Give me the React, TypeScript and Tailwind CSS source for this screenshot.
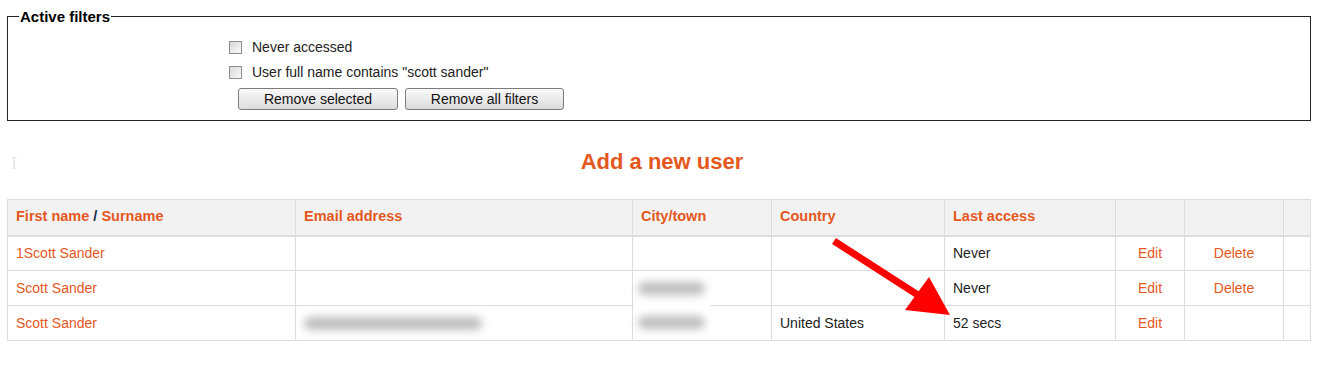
import { useState } from "react";

const orange = "text-[#e4571d]";

interface User {
  name: string;
  email: boolean;
  country: string;
  lastAccess: string;
  canDelete: boolean;
}

const users: User[] = [
  { name: "1Scott Sander", email: false, country: "", lastAccess: "Never", canDelete: true },
  { name: "Scott Sander", email: false, country: "", lastAccess: "Never", canDelete: true },
  { name: "Scott Sander", email: true, country: "United States", lastAccess: "52 secs", canDelete: false },
];

function Checkbox({ label }: { label: string }) {
  const [checked, setChecked] = useState(false);
  return (
    <label className="flex h-[25px] items-center gap-[10px] text-[14px] text-[#222]">
      <span
        onClick={() => setChecked(!checked)}
        className="box-border h-[13px] w-[13px] border border-[#8e8e8e] bg-gradient-to-br from-[#d8d8d8] to-[#fbfbfb]"
      >
        {checked && <span className="block text-[10px] leading-[11px] text-center">✓</span>}
      </span>
      {label}
    </label>
  );
}

function FilterButton({ children, width }: { children: string; width: string }) {
  return (
    <button
      className={`${width} h-[22px] rounded-[3px] border border-[#7c7c7c] bg-gradient-to-b from-[#fafafa] to-[#dcdcdc] text-[14px] leading-none text-[#111]`}
    >
      {children}
    </button>
  );
}

function Blur({ className }: { className: string }) {
  return <div className={`absolute rounded-full bg-[#bdbdbd] blur-[4px] ${className}`} />;
}

export default function App() {
  const th = "border border-[#dddddd] border-b-2 px-2 text-left font-bold text-[14.5px]";
  const td = "border border-[#dddddd] px-2 h-[35px]";

  return (
    <div className="relative min-h-[365px] w-[1324px] bg-white pt-[8px] font-['Liberation_Sans',Arial,sans-serif]">
      <fieldset className="ml-[7px] mr-[13px] border border-[#2a241e] pb-[10px] pl-[11px] pt-[10px]">
        <legend className="px-[1px] text-[15px] font-bold leading-[17px] text-black">
          Active filters
        </legend>
        <div className="pl-[210px]">
          <Checkbox label="Never accessed" />
          <Checkbox label={'User full name contains "scott sander"'} />
          <div className="mt-[3px] flex gap-[7px] pl-[9px]">
            <FilterButton width="w-[160px]">Remove selected</FilterButton>
            <FilterButton width="w-[159px]">Remove all filters</FilterButton>
          </div>
        </div>
      </fieldset>

      <div className="relative mt-[28px] text-center">
        <span className="absolute left-[11px] top-[3px] font-['DejaVu_Serif',serif] text-[16px] text-[#e6e6e6]">
          I
        </span>
        <a className={`text-[22px] font-bold leading-[26px] ${orange}`}>Add a new user</a>
      </div>

      <table className="ml-[7px] mt-[23px] w-[1304px] table-fixed border-collapse text-[14px]">
        <colgroup>
          <col className="w-[288px]" />
          <col className="w-[337px]" />
          <col className="w-[139px]" />
          <col className="w-[173px]" />
          <col className="w-[171px]" />
          <col className="w-[69px]" />
          <col className="w-[99px]" />
          <col />
        </colgroup>
        <thead>
          <tr className="h-[36px] bg-[#f2f2f2]">
            <th className={th}>
              <span className={orange}>First name</span>
              <span className="text-[#1c2a44]"> / </span>
              <span className={orange}>Surname</span>
            </th>
            <th className={`${th} ${orange}`}>Email address</th>
            <th className={`${th} ${orange}`}>City/town</th>
            <th className={`${th} ${orange}`}>Country</th>
            <th className={`${th} ${orange}`}>Last access</th>
            <th className={th}></th>
            <th className={th}></th>
            <th className={th}></th>
          </tr>
        </thead>
        <tbody>
          {users.map((u, i) => (
            <tr key={i}>
              <td className={`${td} ${orange}`}>{u.name}</td>
              <td className={`${td} relative`}>
                {u.email && <Blur className="left-[8px] right-[150px] top-[11px] h-[13px]" />}
              </td>
              <td className={td}></td>
              <td className={`${td} text-[#222]`}>{u.country}</td>
              <td className={`${td} text-[#222]`}>{u.lastAccess}</td>
              <td className={`${td} text-center ${orange}`}>Edit</td>
              <td className={`${td} text-center ${orange}`}>{u.canDelete ? "Delete" : ""}</td>
              <td className={td}></td>
            </tr>
          ))}
        </tbody>
      </table>

      {/* redacted city values, pasted over the grid lines */}
      <div className="absolute left-[634px] top-[277px] h-[61px] w-[76px] bg-white">
        <Blur className="left-[4px] right-[5px] top-[5px] h-[13px]" />
        <Blur className="left-[4px] right-[5px] top-[39px] h-[13px]" />
      </div>

      <svg
        className="pointer-events-none absolute left-0 top-0"
        width="1324"
        height="365"
        viewBox="0 0 1324 365"
      >
        <line x1="834" y1="241" x2="921" y2="297" stroke="#ff0000" strokeWidth="7" />
        <polygon points="950,315 905,310 929,277" fill="#ff0000" />
      </svg>
    </div>
  );
}
